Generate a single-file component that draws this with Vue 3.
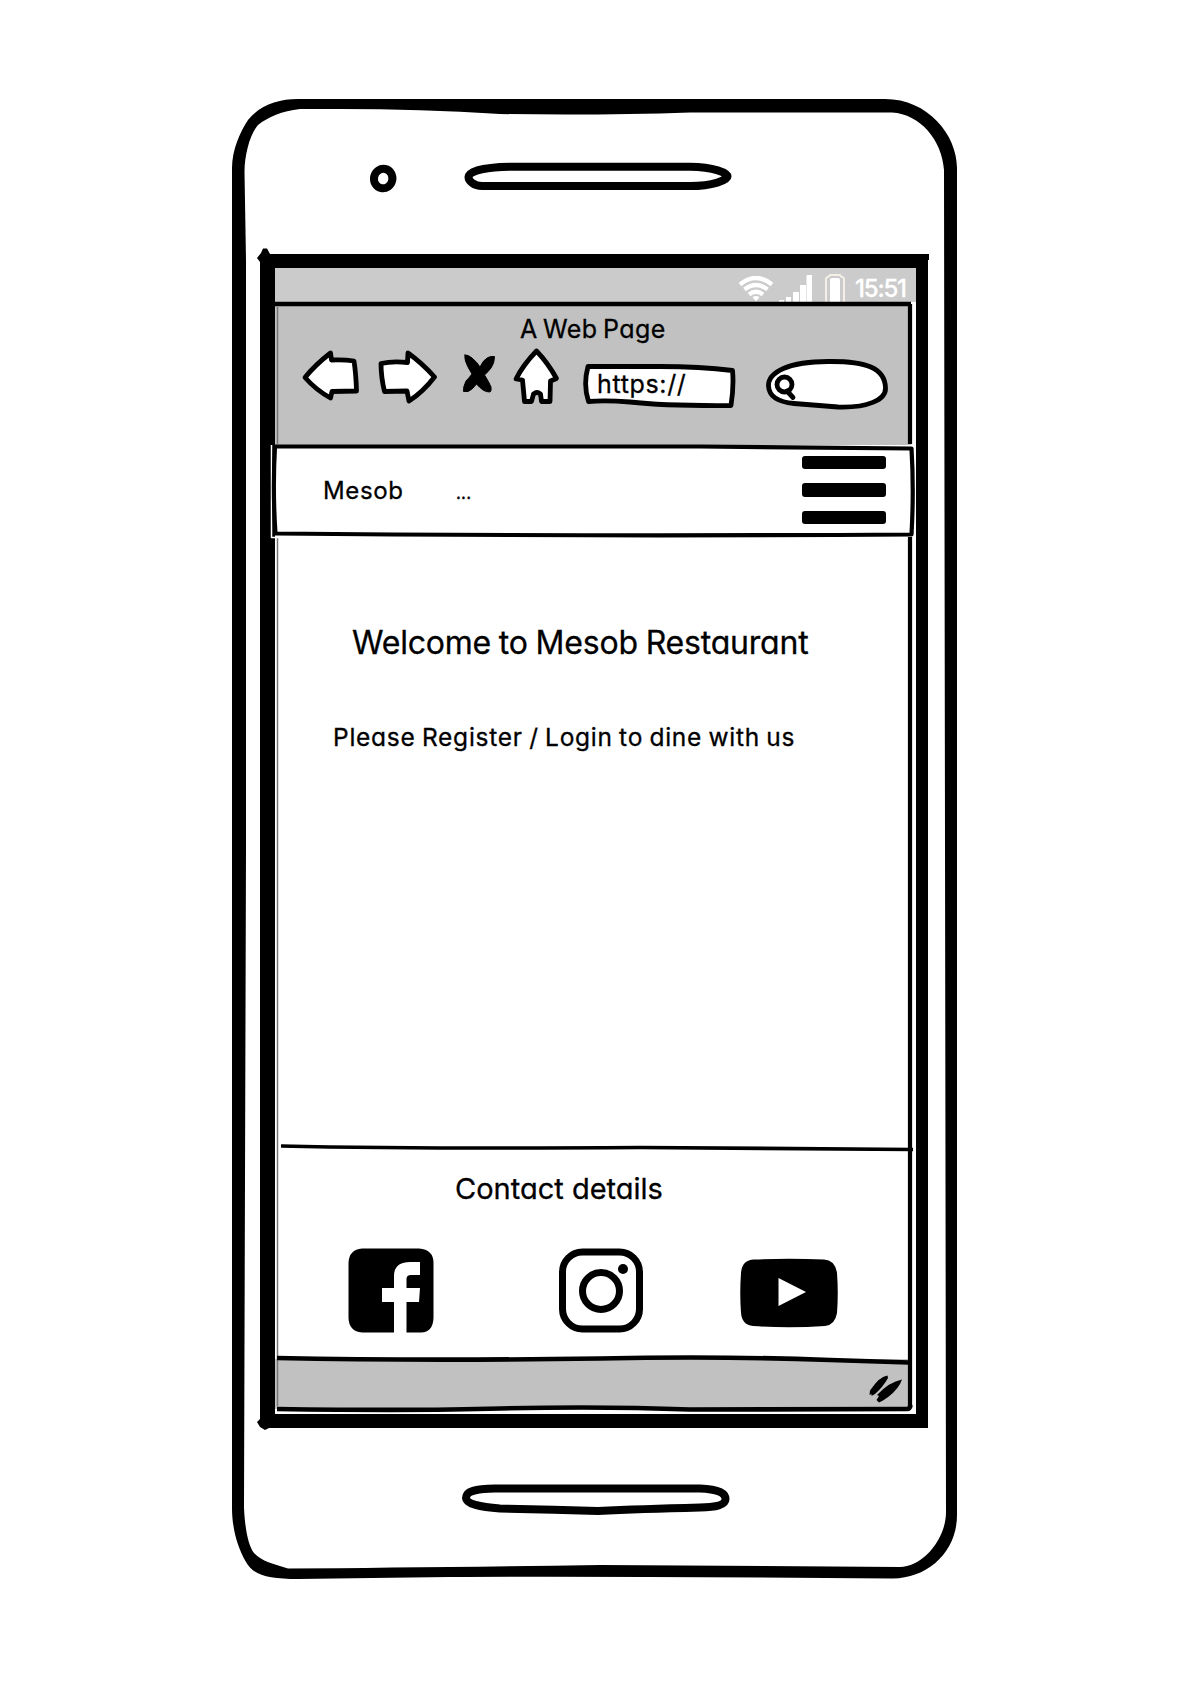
<script setup>
const bars = [0, 1, 2]
</script>

<template>
  <div class="page">
    <div class="screen">
      <div class="status">
        <svg class="wifi" width="36" height="26" viewBox="0 0 36 26">
          <path d="M2 8.500Q18-4.500 34 8.500" />
          <path d="M6.500 13.500Q18 4.500 29.500 13.500" />
          <path d="M11 18.500Q18 13 25 18.500" />
          <path class="dot" d="M14.500 21Q18 19 21.500 21L18 25.500Z" />
        </svg>
        <svg class="signal" width="36" height="28" viewBox="0 0 36 28">
          <path d="M1 26h5v2h-5zM8 23h5v5h-5zM15 18h6v10h-6zM22 11h6v17h-6zM28.500 1h5.500v27h-5.500z" />
        </svg>
        <svg class="battery" width="22" height="29" viewBox="0 0 22 29">
          <path class="case" d="M2 29V6Q2 4 5 3.500L6 2H16L17 3.500Q20 4 20 6V29" />
          <path d="M6 29V7Q6 5 8 5H14Q16 5 16 7V29Z" />
        </svg>
        <span class="clock">15:51</span>
      </div>

      <header class="chrome">
        <div class="title"><span>A Web Page</span></div>
        <div class="tools">
          <svg class="back" width="60" height="56" viewBox="300 348 60 56">
            <path d="M305 377.500Q315 365 330.500 353L331.500 360Q345 359.500 354 361Q356 374 356.500 391L332 391.500L330.500 398Q316 390 305 377.500Z" />
          </svg>
          <svg class="forward" width="62" height="56" viewBox="376 348 62 56">
            <path d="M381 363.500Q392 361 407.500 362.500L408 353Q422 363 434.500 377Q423 392 409 401L407 391L384.500 391.500Q381 377 381 363.500Z" />
          </svg>
          <svg class="stop" width="34" height="40" viewBox="462 353 34 40">
            <path d="M465 355Q468 354.500 472 358Q477 362 480 367Q483 360 488 357.500Q491 356 494.500 356.500Q494.500 363 491 368Q488 372 484.500 375Q489 382 491 387Q491.500 391 490 392Q486 392 483 390Q479 387 476.500 384Q472 390 468 391.500L463.500 391.500Q463 387 466 381Q469 378 472 374Q467 366 465.500 361Q464.500 357 465 355Z" />
          </svg>
          <svg class="home" width="48" height="58" viewBox="512 347 48 58">
            <path d="M536.500 351Q548 363 556.500 378.500L550.500 381L550 401.500H541.500L540.500 394Q537 391 533.500 394L531.500 401.500H524.500L522.500 380L516 379Q523 365 536.500 351Z" />
          </svg>
          <div class="url">
            <svg width="154" height="50" viewBox="583 360 154 50">
              <path d="M588 366.500H660Q700 366.500 732.500 370.500Q734 386 731 405.500Q665 406 630 402Q605 400 588.500 401.500Q583 385 588 366.500Z" />
            </svg>
            <span>https://</span>
          </div>
          <svg class="search" width="124" height="54" viewBox="765 357 124 54">
            <path d="M768.500 386C768 372 789 361.500 828 361.500C866 361 885 368 885.500 388C886 400 867 408 838 407L794 403.500C778 402 769 396 768.500 386Z" />
            <circle cx="784.500" cy="384.500" r="7.500" />
            <path d="M787 391L793 397.500" />
          </svg>
        </div>
      </header>

      <nav class="nav">
        <span class="brand">Mesob</span>
        <span class="dots">...</span>
        <div class="menu"><i v-for="b in bars" :key="b"></i></div>
      </nav>

      <main class="main">
        <h1><span>Welcome to Mesob Restaurant</span></h1>
        <p><span>Please Register / Login to dine with us</span></p>
      </main>

      <footer class="footer">
        <h2><span>Contact details</span></h2>
        <div class="social">
          <svg class="fb" width="86" height="86" viewBox="0 0 86 86">
            <path d="M14 .5H71Q85.500 1.500 85.500 15V70Q85 84 73 84.500H58.500V54H71L72 40H58.500V31Q58.500 27 63 27H72V14H62Q46 14 46 28V40H34V54H46V84.500H14Q1 83.500 .5 70V15Q1 1.500 14 .5Z" />
          </svg>
          <svg class="ig" width="86" height="86" viewBox="0 0 86 86">
            <rect x="4.500" y="4" width="77" height="77" rx="20" />
            <circle cx="43" cy="43" r="18.500" />
            <circle class="dot" cx="65" cy="21" r="5" />
          </svg>
          <svg class="yt" width="98" height="70" viewBox="0 0 98 70">
            <path fill-rule="evenodd" d="M14 1.500Q49 0 84 1.500Q95 2 97 15Q98.500 35 97 55Q95 67 85 68Q49 70.500 13 68Q2 67 1 55Q-.5 35 1 15Q2 2 14 1.500ZM38.500 20V48L66 34Z" />
          </svg>
        </div>
      </footer>

      <div class="grip">
        <svg width="36" height="30" viewBox="868 1373 36 30">
          <path d="M887.500 1375.500Q880 1376 870 1390.500L869.500 1395L871.500 1394V1396L875 1394Q883 1387 888 1378Z" />
          <path d="M902 1379.500Q889 1382 877 1395L879 1396L876.500 1400L879 1402.500L883 1400.500Q895 1393 900 1384Z" />
        </svg>
      </div>
    </div>

    <!-- hand-drawn outlines of the device and its screen -->
    <svg class="ink" width="1191" height="1684" viewBox="0 0 1191 1684">
      <path fill-rule="evenodd" d="M232 168C232 150 240 132 248 120C260 105 278 99 298 99H885C928 99 957 135 957 168V1515C957 1552 928 1578 893 1578.500Q600 1576 450 1577Q370 1578 298 1579C268 1579 253 1575 246 1562C236 1545 232 1525 232 1508Z
        M244.500 172L246 260V850L244 1508C245 1528 248 1545 254 1553C262 1562 275 1564 288 1568.500Q420 1567.500 600 1565L900 1567C922 1567 946 1540 946 1512L944 170C942 140 920 114 892 112.500H690Q600 115.500 500 114Q420 109 340 109H300C282 111 268 117 258 125C250 134 244.500 155 244.500 172Z" />
      <path fill-rule="evenodd" d="M260 262L257 258L261 253L263 248.500H267L270 254H929V260H928V1428H269L265 1430L260 1427L257 1422L260 1419ZM275 268V1414H916V268Z" />
      <g class="line">
        <ellipse cx="383.300" cy="178.500" rx="9.200" ry="9.800" transform="rotate(12 383 178)" />
        <path d="M468.500 177C469 170 490 167 510 166.700H690C714 167 727.500 173 727.500 176.500C727.500 180 713 186 690 186H482C474 186 468.500 181 468.500 177Z" />
        <path d="M466 1498C466 1491 475 1489 495 1488.500H700C717 1489 725.500 1493 725.500 1499C725.500 1505 716 1507 700 1507.500Q640 1509 598 1511Q550 1509.500 500 1508.500C480 1507 466 1504 466 1498Z" />
      </g>
      <g class="thin">
        <path stroke-width="4.600" d="M275 304H911" />
        <path d="M910 304V444M910 537V1408" />
        <path class="faint" d="M277.500 307V444M277.500 538V1406" />
        <path class="gap" d="M271.500 445V537.500H280" />
        <path d="M275 446.500H700L911.500 448.500Q914 490 911.500 534.500Q600 536.500 275.500 533.500Q272.500 490 275 446.500Z" />
        <path stroke-width="3.600" d="M281 1146Q420 1149 640 1147.500L913 1149.500" />
        <path stroke-width="4.600" d="M277 1358Q420 1361 600 1358.500Q720 1356 830 1360L909 1362.500" />
        <path stroke-width="4.600" d="M277 1409Q420 1411 500 1408.500Q600 1406 690 1409.500L907 1409Q910 1409 910.500 1405" />
      </g>
    </svg>
  </div>
</template>

<style>
body { margin: 0; background: #fff; }
</style>

<style scoped>
.page {
  position: relative;
  box-sizing: border-box;
  width: 1191px;
  height: 1684px;
  padding: 268px 275px 270px;
  background: #fff;
  color: #000;
  font-family: Inter, "Liberation Sans", sans-serif;
  font-feature-settings: "cv11" 1;
  overflow: hidden;
}
.ink { position: absolute; inset: 0; pointer-events: none; }
.line { fill: none; stroke: #000; stroke-width: 8; }
.thin { fill: none; stroke: #000; stroke-width: 4.2; stroke-linejoin: round; }
.faint { stroke: #777; stroke-width: 1.5; }
.gap { stroke: #fff; stroke-width: 1.5; }
svg { display: block; flex: none; }
span { display: block; white-space: nowrap; -webkit-text-stroke: 0.3px currentColor; }
.screen { display: flex; flex-direction: column; width: 641px; height: 1146px; }
.status {
  display: flex;
  align-items: flex-end;
  height: 34px;
  padding-left: 463px;
  background: #cbcbcb;
  color: #fff;
}
.status svg { fill: #fff; }
.wifi path { fill: none; stroke: #fff; stroke-width: 4.3; }
.wifi .dot { fill: #fff; stroke: none; }
.signal { margin-left: 4px; }
.battery { margin-left: 10px; }
.battery .case { fill: none; stroke: #f4f0e8; stroke-width: 2; }
.clock { margin-left: 9px; font-size: 24px; line-height: 26px; font-weight: 500; letter-spacing: -1.2px; }
.chrome { width: 636px; height: 143px; background: #c1c1c1; }
.title { height: 44px; padding: 11px 0 0 245px; box-sizing: border-box; }
.title span { font-size: 25px; line-height: 32px; letter-spacing: 0.4px; word-spacing: -2px; }
.tools { display: flex; align-items: flex-start; padding-left: 25px; }
.tools svg { fill: #fff; stroke: #000; stroke-width: 4.8; stroke-linejoin: round; stroke-linecap: round; }
.back { margin-top: 2px; }
.forward { margin: 2px 0 0 16px; }
.tools .stop { margin: 7px 0 0 24px; fill: #000; stroke-width: 1; }
.home { margin: 1px 0 0 16px; }
.url { display: grid; margin: 14px 0 0 23px; }
.url > * { grid-area: 1 / 1; }
.url span { padding: 10px 0 0 14px; font-size: 25px; line-height: 28px; letter-spacing: 0.65px; }
.search { margin: 11px 0 0 28px; }
.nav { display: flex; width: 636px; height: 90px; background: #fff; }
.brand { width: 133px; padding: 31px 0 0 48px; font-size: 24px; line-height: 29px; letter-spacing: 0.65px; }
.dots { width: 346px; padding-top: 37px; font-size: 17px; line-height: 22px; letter-spacing: 0.2px; }
.menu { display: flex; flex-direction: column; gap: 14px; padding-top: 10.500px; }
.menu i { width: 84px; height: 13.6px; border-radius: 3px; background: #000; }
.main { height: 613px; }
h1, h2, p { margin: 0; font-weight: 400; }
h1 { padding: 88px 0 0 77px; font-size: 32px; line-height: 40px; letter-spacing: -0.2px; word-spacing: -1px; }
p { padding: 58px 0 0 58px; font-size: 24.5px; line-height: 32px; letter-spacing: 0.75px; word-spacing: -1.3px; }
.footer { height: 211px; }
h2 { padding: 23px 0 0 180px; font-size: 29px; line-height: 36px; }
.social { display: flex; padding: 41px 0 0 72.500px; }
.ig { margin-left: 124.500px; }
.ig * { fill: none; stroke: #000; stroke-width: 7; }
.ig .dot { fill: #000; stroke: none; }
.yt { margin: 10px 0 0 96px; }
.grip { width: 636px; height: 50px; background: #c1c1c1; }
.grip svg { margin: 14px 0 0 593px; }
</style>
